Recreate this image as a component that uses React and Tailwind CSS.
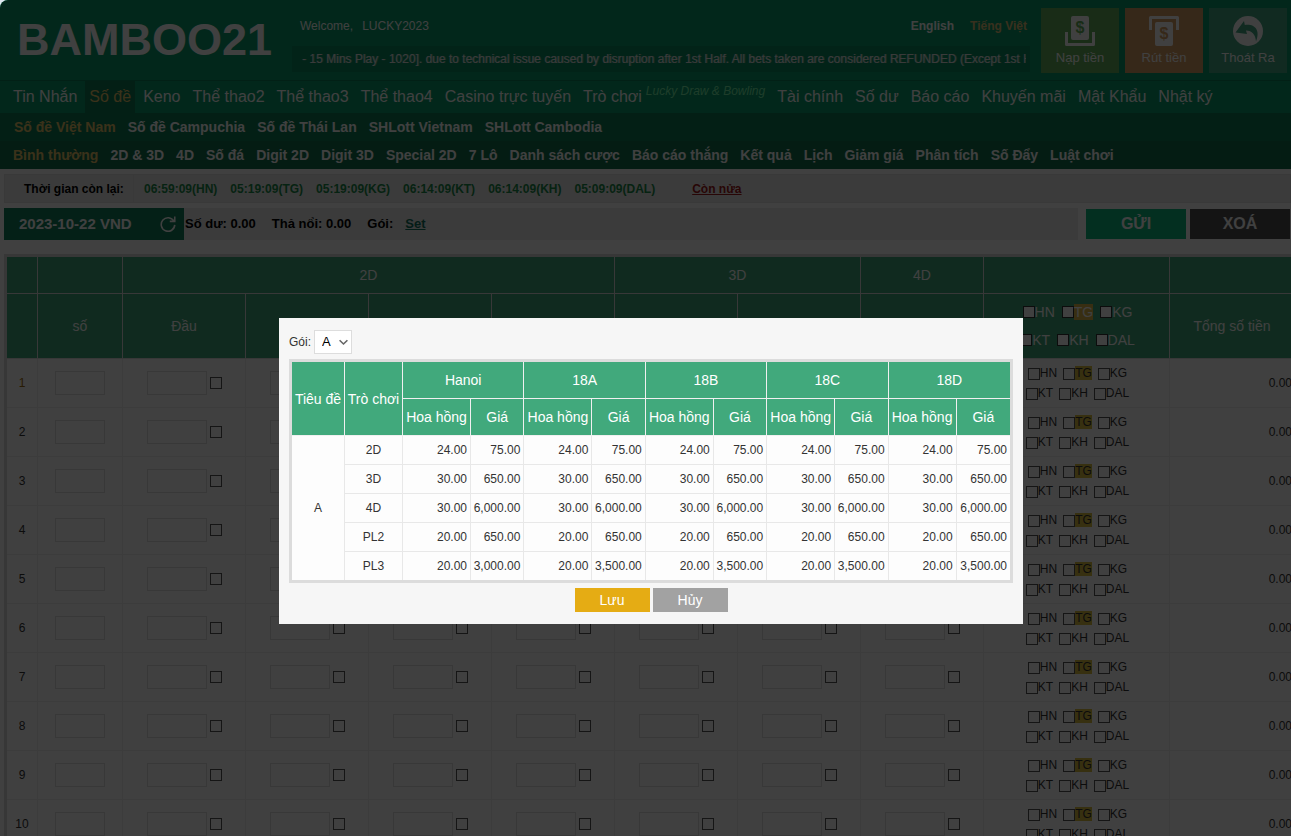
import { Fragment } from 'react'

const mainMenu = [
  { label: 'Tin Nhắn' },
  { label: 'Số đề', active: true },
  { label: 'Keno' },
  { label: 'Thể thao2' },
  { label: 'Thể thao3' },
  { label: 'Thể thao4' },
  { label: 'Casino trực tuyến' },
  { label: 'Trò chơi', note: 'Lucky Draw & Bowling' },
  { label: 'Tài chính' },
  { label: 'Số dư' },
  { label: 'Báo cáo' },
  { label: 'Khuyến mãi' },
  { label: 'Mật Khẩu' },
  { label: 'Nhật ký' }
]

const regionMenu = ['Số đề Việt Nam', 'Số đề Campuchia', 'Số đề Thái Lan', 'SHLott Vietnam', 'SHLott Cambodia']

const betMenu = [
  'Bình thường', '2D & 3D', '4D', 'Số đá', 'Digit 2D', 'Digit 3D', 'Special 2D', '7 Lô',
  'Danh sách cược', 'Báo cáo thắng', 'Kết quả', 'Lịch', 'Giảm giá', 'Phân tích', 'Số Đẩy', 'Luật chơi'
]

const timers = ['06:59:09(HN)', '05:19:09(TG)', '05:19:09(KG)', '06:14:09(KT)', '06:14:09(KH)', '05:09:09(DAL)']

const stations = [['HN', 'TG', 'KG'], ['KT', 'KH', 'DAL']]

const rows = [1, 2, 3, 4, 5, 6, 7, 8, 9, 10]
const betColumns = ['Đầu', 'Đuôi', 'Đầu đuôi', 'Lô', '3D đuôi', '3D lô', '4D đuôi']

const markets = ['Hanoi', '18A', '18B', '18C', '18D']
const packageRows = [
  { game: '2D', commission: '24.00', prices: ['75.00', '75.00', '75.00', '75.00', '75.00'] },
  { game: '3D', commission: '30.00', prices: ['650.00', '650.00', '650.00', '650.00', '650.00'] },
  { game: '4D', commission: '30.00', prices: ['6,000.00', '6,000.00', '6,000.00', '6,000.00', '6,000.00'] },
  { game: 'PL2', commission: '20.00', prices: ['650.00', '650.00', '650.00', '650.00', '650.00'] },
  { game: 'PL3', commission: '20.00', prices: ['3,000.00', '3,500.00', '3,500.00', '3,500.00', '3,500.00'] }
]

function DepositIcon() {
  return (
    <svg width="30" height="30" viewBox="0 0 30 30" aria-hidden="true">
      <rect x="6" y="0" width="18" height="24" rx="2" fill="#fff" />
      <path d="M1.5 16V28.5H28.5V16" fill="none" stroke="#fff" strokeWidth="3" strokeLinejoin="round" />
      <text x="15" y="17" textAnchor="middle" fontSize="16" fontWeight="bold" fill="#63b15c">$</text>
    </svg>
  )
}

function WithdrawIcon() {
  return (
    <svg width="30" height="30" viewBox="0 0 30 30" aria-hidden="true">
      <path d="M1.5 14V1.5H28.5V14" fill="none" stroke="#fff" strokeWidth="3" strokeLinejoin="round" />
      <rect x="6" y="6" width="18" height="24" rx="2" fill="#fff" />
      <text x="15" y="23" textAnchor="middle" fontSize="16" fontWeight="bold" fill="#d8a065">$</text>
    </svg>
  )
}

function LogoutIcon() {
  return (
    <svg width="30" height="30" viewBox="0 0 30 30" aria-hidden="true">
      <circle cx="15" cy="15" r="15" fill="#fff" />
      <path d="M2.5 16.5L11 5L11.8 9C21 7.5 28 13.5 23 25.5C22.5 18.5 19 14.5 13 14.5L14 18Z" fill="#44a884" />
    </svg>
  )
}

function ReloadIcon() {
  return (
    <svg width="16" height="16" viewBox="0 0 18 18" fill="none" stroke="#fff" strokeWidth="1.8" aria-hidden="true">
      <path d="M15.6 5.8A7.6 7.6 0 1 0 16.6 10" />
      <path d="M16.6 0.6V6H11" />
    </svg>
  )
}

function QuickButton({ icon, label, className }) {
  return (
    <button type="button" className={`flex h-[65px] w-[78px] flex-col items-center pt-2 text-[13px] leading-6 text-white ${className}`}>
      {icon}
      {label}
    </button>
  )
}

function Header() {
  return (
    <header className="bg-[#089c6c] text-white">
      <div className="flex h-20 items-start justify-between pt-2 pr-1 pl-[17px]">
        <h1 className="w-[275px] shrink-0 pt-2 text-[45px] leading-[48px] font-bold">BAMBOO21</h1>
        <div className="min-w-0 grow">
          <div className="flex h-[38px] items-center justify-between pr-[3px] pb-[2px] pl-2 text-xs">
            <p className="flex gap-[9px]">
              <span>Welcome,</span>
              <span>LUCKY2023</span>
            </p>
            <div className="flex gap-4 font-bold">
              <a href="#en">English</a>
              <a href="#vi" className="text-[#e0c078]">Tiếng Việt</a>
            </div>
          </div>
          <div className="h-[26px] bg-[#088a60] px-1">
            <p className="overflow-hidden pl-[6px] text-xs leading-[26px] whitespace-nowrap text-[#e8e8e8] [text-shadow:1px_0_0_#ffffff60]">
              - 15 Mins Play - 1020]. due to technical issue caused by disruption after 1st Half. All bets taken are considered REFUNDED (Except 1st Half).
            </p>
          </div>
        </div>
        <div className="ml-[11px] flex shrink-0 gap-[6px]">
          <QuickButton icon={<DepositIcon />} label="Nạp tiền" className="bg-[#63b15c]" />
          <QuickButton icon={<WithdrawIcon />} label="Rút tiền" className="bg-[#d8a065]" />
          <QuickButton icon={<LogoutIcon />} label="Thoát Ra" className="bg-[#44a884]" />
        </div>
      </div>

      <nav className="flex h-[33px] gap-1 border-t border-[#088058] pl-[9px] text-base leading-8 whitespace-nowrap">
        {mainMenu.map(item => (
          <a
            key={item.label}
            href="#menu"
            className={`px-1 ${item.active ? 'bg-[#0c7c54] text-[#e8c468]' : ''}`}
          >
            {item.label}
            {item.note && (
              <sup className="top-0 ml-1 align-[7px] text-xs leading-none text-[#78f0a8] italic">{item.note}</sup>
            )}
          </a>
        ))}
      </nav>
      <nav className="flex h-7 gap-3 bg-[#0c7c54] pl-[14px] text-sm leading-7 font-bold whitespace-nowrap">
        {regionMenu.map((label, i) => (
          <a key={label} href="#region" className={i === 0 ? 'text-[#e8c468]' : ''}>{label}</a>
        ))}
      </nav>
      <nav className="flex h-7 gap-3 bg-[#10704c] pl-[13px] text-sm leading-7 font-bold whitespace-nowrap">
        {betMenu.map((label, i) => (
          <a key={label} href="#bet" className={i === 0 ? 'text-[#e8c468]' : ''}>{label}</a>
        ))}
      </nav>
    </header>
  )
}

function StatusBars() {
  return (
    <div className="pt-[5px] pl-1">
      <div className="flex h-[29px] items-center border border-[#e2e2e2] bg-[#ebebeb] text-xs font-bold">
        <span className="flex h-full w-[129px] items-center border-r border-[#e2e2e2] pl-[19px] text-black">Thời gian còn lại:</span>
        <div className="flex gap-[13px] pl-[10px] text-[#1a8a4a]">
          {timers.map(t => <span key={t}>{t}</span>)}
        </div>
        <a href="#more" className="ml-[37px] text-[#a01818] underline">Còn nửa</a>
      </div>

      <div className="mt-[5px] flex h-8 items-center">
        <div className="flex h-full grow items-center bg-[#ebebeb] text-[13px] font-bold text-black">
          <div className="flex h-full w-[180px] items-center justify-between bg-[#10805c] pr-2 pl-[15px] text-[15px] text-white">
            2023-10-22 VND
            <button type="button" aria-label="Tải lại"><ReloadIcon /></button>
          </div>
          <span className="pl-px">Số dư: 0.00</span>
          <span className="ml-4">Thả nổi: 0.00</span>
          <span className="ml-4">Gói:</span>
          <a href="#set" className="ml-3 text-[#10705c] underline">Set</a>
        </div>
        <button type="button" className="ml-2 h-[30px] w-[100px] bg-[#0cbc80] text-base font-bold text-white">GỬI</button>
        <button type="button" className="mr-px ml-1 h-[30px] w-[100px] bg-[#505050] text-base font-bold text-white">XOÁ</button>
      </div>
    </div>
  )
}

function StationPicker({ header }) {
  return (
    <div className={header ? 'pl-[2px] text-sm leading-7' : 'pl-[2px] text-xs leading-5 text-[#333]'}>
      {stations.map((line, i) => (
        <div key={i} className={`flex items-center justify-center ${header ? 'gap-[7px]' : 'gap-[6px]'}`}>
          {line.map(name => (
            <label key={name} className="flex items-center">
              <input
                type="checkbox"
                className={`size-3 appearance-none border ${header ? 'border-[#333] bg-white' : 'mt-[2px] border-[#555]'}`}
              />
              <span className={name !== 'TG' ? '' : header ? 'bg-[#e0b848] leading-4' : 'bg-[#dcc040] leading-[14px]'}>
                {name}
              </span>
            </label>
          ))}
        </div>
      ))}
    </div>
  )
}

function BetTable() {
  const th = 'border-r border-b border-[#dfdfdf] font-normal'
  const td = 'border-r border-b border-[#ededed]'
  return (
    <div className="mt-[14px] ml-1">
      <table className="w-[1294px] table-fixed border-separate border-spacing-0 border-[3px] border-[#dcdcdc]">
        <colgroup>
          <col className="w-[31px]" />
          <col className="w-[85px]" />
          {betColumns.map(c => <col key={c} className="w-[123px]" />)}
          <col className="w-[186px]" />
          <col />
        </colgroup>
        <thead className="bg-[#41a97c] text-sm text-white">
          <tr className="h-[37px]">
            <th className={th}></th>
            <th className={th}></th>
            <th className={th} colSpan={4}>2D</th>
            <th className={th} colSpan={2}>3D</th>
            <th className={th}>4D</th>
            <th className={th}></th>
            <th className={th}></th>
          </tr>
          <tr className="h-[65px]">
            <th className={th}></th>
            <th className={th}>số</th>
            {betColumns.map((c, i) => <th key={c} className={th}>{i === 0 ? c : ''}</th>)}
            <th className={th}><StationPicker header /></th>
            <th className={th}>Tổng số tiền</th>
          </tr>
        </thead>
        <tbody className="bg-white text-xs text-[#333]">
          {rows.map(n => (
            <tr key={n} className="h-[49px]">
              <td className={`text-center ${td} ${n === 1 ? 'text-[#a06c10]' : ''}`}>{n}</td>
              <td className={td}>
                <input type="text" aria-label={`Số ${n}`} className="mx-auto block h-6 w-[50px] border border-[#e0e0e0] px-1" />
              </td>
              {betColumns.map(c => (
                <td key={c} className={td}>
                  <div className="flex items-center justify-center gap-[3px]">
                    <input type="text" aria-label={`${c} ${n}`} className="h-6 w-[60px] border border-[#e0e0e0] px-1" />
                    <input type="checkbox" aria-label={`Chọn ${c} ${n}`} className="size-3 appearance-none border border-[#555]" />
                  </div>
                </td>
              ))}
              <td className={td}><StationPicker /></td>
              <td className={`pr-[2px] text-right ${td}`}>0.00</td>
            </tr>
          ))}
        </tbody>
      </table>
    </div>
  )
}

function PackageDialog() {
  const th = 'border-b border-[#f0f0f0] font-normal not-last:border-r'
  const line = 'border-[#e8e8e8]'
  return (
    <div role="dialog" aria-modal="true" aria-label="Gói" className="w-[744px] bg-[#f6f6f6] px-[10px] py-3 text-xs text-[#333]">
      <div className="flex items-center gap-[3px]">
        <label htmlFor="package">Gói:</label>
        <div className="relative">
          <select id="package" defaultValue="A" className="block h-6 w-[38px] appearance-none border border-[#ddd] bg-white pl-[7px] text-[13px] text-black">
            <option>A</option>
          </select>
          <svg className="pointer-events-none absolute top-[9px] right-1 h-[7px] w-[9px]" viewBox="0 0 9 7" fill="none" stroke="#666" strokeWidth="1.6">
            <path d="M0.6 1.2L4.5 5L8.4 1.2" />
          </svg>
        </div>
      </div>

      <table className="mt-[5px] w-full table-fixed border-separate border-spacing-0 border-[3px] border-[#dcdcdc]">
        <colgroup>
          <col className="w-[53px]" />
          <col className="w-[58px]" />
          {markets.map(m => (
            <Fragment key={m}>
              <col className="w-[68px]" />
              <col />
            </Fragment>
          ))}
        </colgroup>
        <thead className="bg-[#41a97c] text-sm whitespace-nowrap text-white">
          <tr className="h-[37px]">
            <th rowSpan={2} className={th}>Tiêu đề</th>
            <th rowSpan={2} className={th}>Trò chơi</th>
            {markets.map(m => <th key={m} colSpan={2} className={th}>{m}</th>)}
          </tr>
          <tr className="h-[37px]">
            {markets.map(m => (
              <Fragment key={m}>
                <th className={th}>Hoa hồng</th>
                <th className={th}>Giá</th>
              </Fragment>
            ))}
          </tr>
        </thead>
        <tbody className="bg-[#fdfdfd]">
          {packageRows.map((row, i) => {
            const last = i === packageRows.length - 1
            const edge = last ? line : `border-b ${line}`
            return (
              <tr key={row.game} className={last ? 'h-7' : 'h-[29px]'}>
                {i === 0 && <td rowSpan={5} className={`border-r text-center ${line}`}>A</td>}
                <td className={`border-r text-center ${edge}`}>{row.game}</td>
                {row.prices.map((price, j) => (
                  <Fragment key={j}>
                    <td className={`border-r pr-[3px] text-right ${edge}`}>{row.commission}</td>
                    <td className={`pr-[3px] text-right not-last:border-r ${edge}`}>{price}</td>
                  </Fragment>
                ))}
              </tr>
            )
          })}
        </tbody>
      </table>

      <div className="mt-[5px] flex justify-center gap-[3px] text-sm text-white">
        <button type="button" className="h-6 w-[75px] bg-[#e5ac14]">Lưu</button>
        <button type="button" className="h-6 w-[75px] bg-[#a2a2a2]">Hủy</button>
      </div>
    </div>
  )
}

function App() {
  return (
    <div className="h-screen bg-[#dfe8f0] font-['Liberation_Sans',Arial,sans-serif]">
      <div className="relative h-full overflow-hidden rounded-tl-lg bg-white">
        <Header />
        <StatusBars />
        <BetTable />
        <div className="absolute inset-0 flex items-start justify-center bg-black/75 pt-[318px] pl-[11px]">
          <PackageDialog />
        </div>
      </div>
    </div>
  )
}

export default App
